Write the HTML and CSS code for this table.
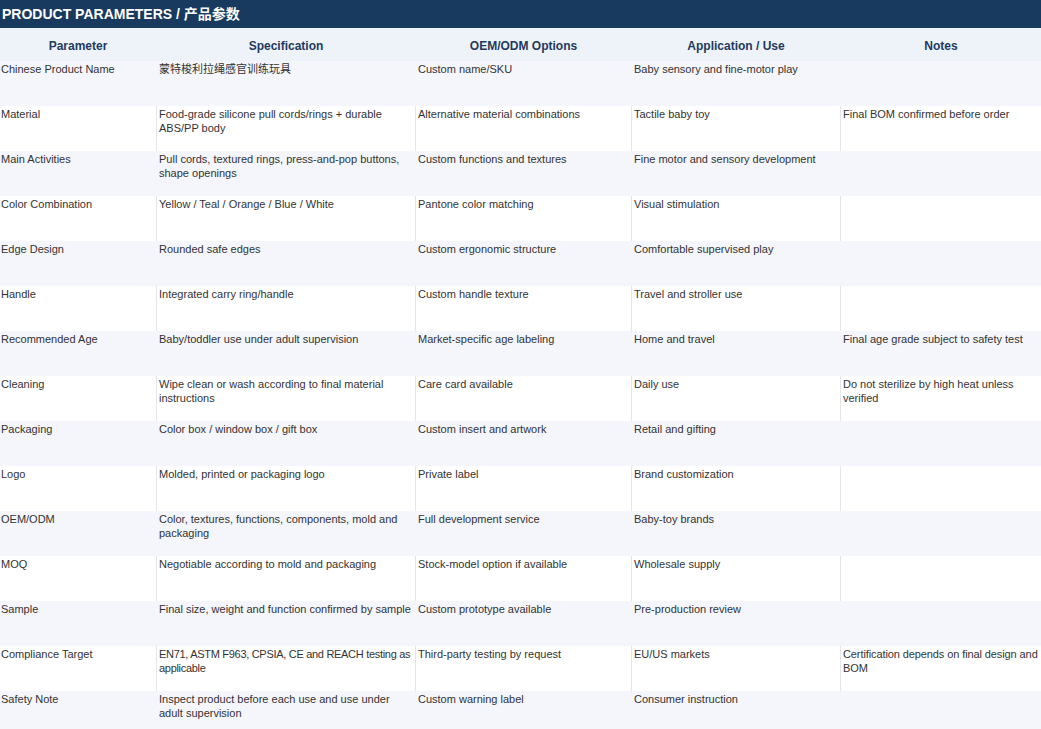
FILE: index.html
```html
<!DOCTYPE html>
<html lang="en">
<head>
<meta charset="utf-8">
<title>Product Parameters</title>
<link rel="stylesheet" href="styles.css">
</head>
<body>
<div class="sheet">
  <div class="title">PRODUCT PARAMETERS / 产品参数</div>
  <div class="row head">
    <div class="cell">Parameter</div>
    <div class="cell">Specification</div>
    <div class="cell">OEM/ODM Options</div>
    <div class="cell">Application / Use</div>
    <div class="cell">Notes</div>
  </div>
  <div class="row odd">
    <div class="cell">Chinese Product Name</div>
    <div class="cell">蒙特梭利拉绳感官训练玩具</div>
    <div class="cell">Custom name/SKU</div>
    <div class="cell">Baby sensory and fine-motor play</div>
    <div class="cell"></div>
  </div>
  <div class="row even">
    <div class="cell">Material</div>
    <div class="cell">Food-grade silicone pull cords/rings + durable ABS/PP body</div>
    <div class="cell">Alternative material combinations</div>
    <div class="cell">Tactile baby toy</div>
    <div class="cell">Final BOM confirmed before order</div>
  </div>
  <div class="row odd">
    <div class="cell">Main Activities</div>
    <div class="cell">Pull cords, textured rings, press-and-pop buttons, shape openings</div>
    <div class="cell">Custom functions and textures</div>
    <div class="cell">Fine motor and sensory development</div>
    <div class="cell"></div>
  </div>
  <div class="row even">
    <div class="cell">Color Combination</div>
    <div class="cell">Yellow / Teal / Orange / Blue / White</div>
    <div class="cell">Pantone color matching</div>
    <div class="cell">Visual stimulation</div>
    <div class="cell"></div>
  </div>
  <div class="row odd">
    <div class="cell">Edge Design</div>
    <div class="cell">Rounded safe edges</div>
    <div class="cell">Custom ergonomic structure</div>
    <div class="cell">Comfortable supervised play</div>
    <div class="cell"></div>
  </div>
  <div class="row even">
    <div class="cell">Handle</div>
    <div class="cell">Integrated carry ring/handle</div>
    <div class="cell">Custom handle texture</div>
    <div class="cell">Travel and stroller use</div>
    <div class="cell"></div>
  </div>
  <div class="row odd">
    <div class="cell">Recommended Age</div>
    <div class="cell">Baby/toddler use under adult supervision</div>
    <div class="cell">Market-specific age labeling</div>
    <div class="cell">Home and travel</div>
    <div class="cell">Final age grade subject to safety test</div>
  </div>
  <div class="row even">
    <div class="cell">Cleaning</div>
    <div class="cell">Wipe clean or wash according to final material instructions</div>
    <div class="cell">Care card available</div>
    <div class="cell">Daily use</div>
    <div class="cell">Do not sterilize by high heat unless verified</div>
  </div>
  <div class="row odd">
    <div class="cell">Packaging</div>
    <div class="cell">Color box / window box / gift box</div>
    <div class="cell">Custom insert and artwork</div>
    <div class="cell">Retail and gifting</div>
    <div class="cell"></div>
  </div>
  <div class="row even">
    <div class="cell">Logo</div>
    <div class="cell">Molded, printed or packaging logo</div>
    <div class="cell">Private label</div>
    <div class="cell">Brand customization</div>
    <div class="cell"></div>
  </div>
  <div class="row odd">
    <div class="cell">OEM/ODM</div>
    <div class="cell">Color, textures, functions, components, mold and packaging</div>
    <div class="cell">Full development service</div>
    <div class="cell">Baby-toy brands</div>
    <div class="cell"></div>
  </div>
  <div class="row even">
    <div class="cell">MOQ</div>
    <div class="cell">Negotiable according to mold and packaging</div>
    <div class="cell">Stock-model option if available</div>
    <div class="cell">Wholesale supply</div>
    <div class="cell"></div>
  </div>
  <div class="row odd">
    <div class="cell">Sample</div>
    <div class="cell">Final size, weight and function confirmed by sample</div>
    <div class="cell">Custom prototype available</div>
    <div class="cell">Pre-production review</div>
    <div class="cell"></div>
  </div>
  <div class="row even">
    <div class="cell">Compliance Target</div>
    <div class="cell tight">EN71, ASTM F963, CPSIA, CE and REACH testing as applicable</div>
    <div class="cell">Third-party testing by request</div>
    <div class="cell">EU/US markets</div>
    <div class="cell snug">Certification depends on final design and BOM</div>
  </div>
  <div class="row odd">
    <div class="cell">Safety Note</div>
    <div class="cell">Inspect product before each use and use under adult supervision</div>
    <div class="cell">Custom warning label</div>
    <div class="cell">Consumer instruction</div>
    <div class="cell"></div>
  </div>
</div>
</body>
</html>
```

FILE: styles.css
```css
html, body {
  margin: 0;
  padding: 0;
  background: #ffffff;
}

body {
  font-family: "Liberation Sans", Arial, "Noto Sans CJK SC", sans-serif;
  color: #333333;
  overflow: hidden;
}

.sheet {
  width: 1041px;
}

.title {
  height: 28px;
  line-height: 28px;
  padding-left: 2px;
  background: #173a5e;
  color: #ffffff;
  font-weight: bold;
  font-size: 14px;
  white-space: nowrap;
}

.row {
  display: grid;
  grid-template-columns: 156px 259px 216px 209px 1fr;
  height: 45px;
}

.cell {
  font-size: 11px;
  line-height: 14px;
  padding: 1px 1px 0 2px;
  border-left: 1px solid transparent;
  overflow: hidden;
}

.cell:first-child {
  border-left: none;
  padding-left: 1px;
}

.tight {
  letter-spacing: -0.3px;
}

.snug {
  letter-spacing: -0.1px;
}

.head {
  height: 33px;
  background: #eef3f9;
}

.head .cell {
  font-size: 12px;
  font-weight: bold;
  color: #1f3a5f;
  text-align: center;
  display: flex;
  align-items: center;
  justify-content: center;
  padding: 2px 0 0 0;
}

.odd {
  background: #f4f6fb;
}

.even {
  background: #ffffff;
}

.even .cell {
  border-left-color: #e3e5ea;
}

.even .cell:first-child {
  border-left: none;
}
```
